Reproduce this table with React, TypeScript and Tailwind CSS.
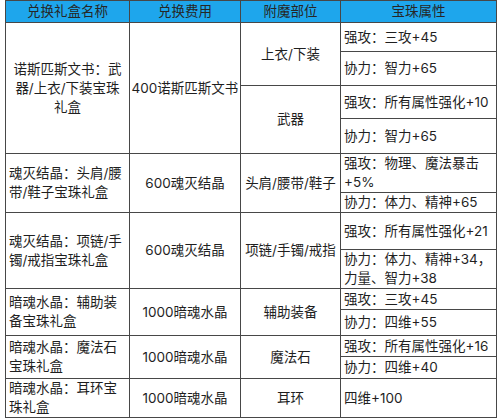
import React from "react";

const font = { fontFamily: '"Inter", "Noto Sans CJK SC", sans-serif' };

const cell = "border border-[#474747] p-0 align-middle";
const left = `${cell} text-left pl-[3px]`;
const center = `${cell} text-center`;

export default function App() {
  return (
    <div className="w-[500px] h-[418px] bg-white" style={font}>
      <table className="ml-[5px] w-[491px] table-fixed border-collapse text-[13.5px] leading-[19px] text-[#1f1f1f]">
        <colgroup>
          <col className="w-[124px]" />
          <col className="w-[111px]" />
          <col className="w-[100px]" />
          <col className="w-[156px]" />
        </colgroup>
        <thead>
          <tr className="h-[22px] bg-[#1ea6ec] text-[#262626]">
            <th className={`${center} font-normal`}>兑换礼盒名称</th>
            <th className={`${center} font-normal`}>兑换费用</th>
            <th className={`${center} font-normal`}>附魔部位</th>
            <th className={`${center} font-normal`}>宝珠属性</th>
          </tr>
        </thead>
        <tbody>
          {/* 诺斯匹斯文书 */}
          <tr className="h-[29px]">
            <td rowSpan={4} className={center}>
              诺斯匹斯文书：武
              <br />
              器/上衣/下装宝珠
              <br />
              礼盒
            </td>
            <td rowSpan={4} className={`${center} whitespace-nowrap`}>400诺斯匹斯文书</td>
            <td rowSpan={2} className={center}>上衣/下装</td>
            <td className={left}>强攻：三攻+45</td>
          </tr>
          <tr className="h-[34px]">
            <td className={left}>协力：智力+65</td>
          </tr>
          <tr className="h-[33px]">
            <td rowSpan={2} className={center}>武器</td>
            <td className={`${left} whitespace-nowrap`}>强攻：所有属性强化+10</td>
          </tr>
          <tr className="h-[35px]">
            <td className={left}>协力：智力+65</td>
          </tr>

          {/* 魂灭结晶 头肩 */}
          <tr className="h-[38px]">
            <td rowSpan={2} className={left}>
              魂灭结晶：头肩/腰
              <br />
              带/鞋子宝珠礼盒
            </td>
            <td rowSpan={2} className={center}>600魂灭结晶</td>
            <td rowSpan={2} className={center}>头肩/腰带/鞋子</td>
            <td className={left}>
              强攻：物理、魔法暴击
              <br />
              +5%
            </td>
          </tr>
          <tr className="h-[19px]">
            <td className={left}>协力：体力、精神+65</td>
          </tr>

          {/* 魂灭结晶 项链 */}
          <tr className="h-[37px]">
            <td rowSpan={2} className={left}>
              魂灭结晶：项链/手
              <br />
              镯/戒指宝珠礼盒
            </td>
            <td rowSpan={2} className={center}>600魂灭结晶</td>
            <td rowSpan={2} className={center}>项链/手镯/戒指</td>
            <td className={`${left} whitespace-nowrap`}>强攻：所有属性强化+21</td>
          </tr>
          <tr className="h-[39px]">
            <td className={left}>
              协力：体力、精神+34，
              <br />
              力量、智力+38
            </td>
          </tr>

          {/* 暗魂水晶 辅助装备 */}
          <tr className="h-[21px]">
            <td rowSpan={2} className={left}>
              暗魂水晶：辅助装
              <br />
              备宝珠礼盒
            </td>
            <td rowSpan={2} className={center}>1000暗魂水晶</td>
            <td rowSpan={2} className={center}>辅助装备</td>
            <td className={left}>强攻：三攻+45</td>
          </tr>
          <tr className="h-[26px]">
            <td className={left}>协力：四维+55</td>
          </tr>

          {/* 暗魂水晶 魔法石 */}
          <tr className="h-[21px]">
            <td rowSpan={2} className={left}>
              暗魂水晶：魔法石
              <br />
              宝珠礼盒
            </td>
            <td rowSpan={2} className={center}>1000暗魂水晶</td>
            <td rowSpan={2} className={center}>魔法石</td>
            <td className={`${left} whitespace-nowrap`}>强攻：所有属性强化+16</td>
          </tr>
          <tr className="h-[22px]">
            <td className={left}>协力：四维+40</td>
          </tr>

          {/* 暗魂水晶 耳环 */}
          <tr className="h-[37px]">
            <td className={left}>
              暗魂水晶：耳环宝
              <br />
              珠礼盒
            </td>
            <td className={center}>1000暗魂水晶</td>
            <td className={center}>耳环</td>
            <td className={left}>四维+100</td>
          </tr>
        </tbody>
      </table>
    </div>
  );
}
